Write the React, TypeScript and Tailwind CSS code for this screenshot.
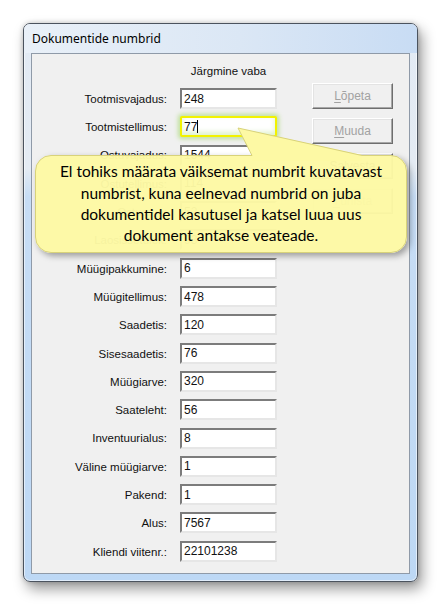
import React from 'react'

type Row = { label: string; value: string; active?: boolean }

const rows: Row[] = [
  { label: 'Tootmisvajadus:', value: '248' },
  { label: 'Tootmistellimus:', value: '77', active: true },
  { label: 'Ostuvajadus:', value: '1544' },
  { label: 'Ostutellimus:', value: '114' },
  { label: 'Ostuarve:', value: '52' },
  { label: 'Laosissetulek:', value: '93' },
  { label: 'Müügipakkumine:', value: '6' },
  { label: 'Müügitellimus:', value: '478' },
  { label: 'Saadetis:', value: '120' },
  { label: 'Sisesaadetis:', value: '76' },
  { label: 'Müügiarve:', value: '320' },
  { label: 'Saateleht:', value: '56' },
  { label: 'Inventuurialus:', value: '8' },
  { label: 'Väline müügiarve:', value: '1' },
  { label: 'Pakend:', value: '1' },
  { label: 'Alus:', value: '7567' },
  { label: 'Kliendi viitenr.:', value: '22101238' },
]

function Field({ value, active }: { value: string; active?: boolean }) {
  if (active) {
    return (
      <div className="w-[97px] h-[21px] border-2 border-[#f2f200] rounded-[2px] bg-white flex items-center pl-[2px] shadow-[0_0_4px_2px_rgba(160,215,100,0.6),inset_0_-3px_5px_rgba(190,230,150,0.5)]">
        <span className="text-[12px] leading-none text-[#111]">{value}</span>
        <span className="w-[1px] h-[13px] bg-black" />
      </div>
    )
  }
  return (
    <div className="w-[97px] h-[21px] border-2 border-t-[#7c7c7c] border-l-[#7c7c7c] border-r-[#e6e6e6] border-b-[#e6e6e6] bg-white flex items-center pl-[2px]">
      <span className="text-[12px] leading-none text-[#111]">{value}</span>
    </div>
  )
}

function Btn({ label, mn, enabled }: { label: string; mn: string; enabled?: boolean }) {
  return (
    <div
      className={`w-[81px] h-[26px] flex items-center justify-center text-[12px] bg-[#f0f0f0] border border-t-white border-l-white border-r-[#6e6e6e] border-b-[#6e6e6e] shadow-[inset_-1px_-1px_0_#a7a7a7,inset_1px_1px_0_#e3e3e3] ${
        enabled ? 'text-[#222]' : 'text-[#a2a2a2]'
      }`}
    >
      <span className="underline underline-offset-2">{mn}</span>
      {label.slice(mn.length)}
    </div>
  )
}

export default function App() {
  return (
    <div className="relative w-[441px] h-[605px] bg-white overflow-hidden font-['Liberation_Sans',Arial,sans-serif]">
      <div className="ml-[23px] mt-[23px] w-[395px] h-[559px] rounded-[7px] border border-[#4b535e] flex flex-col px-[7px] pb-[7px] bg-[linear-gradient(180deg,#e2eaf4_0%,#e4ebf3_26%,#c7ddf5_31%,#bdd8f5_100%)] shadow-[4px_7px_14px_rgba(0,0,0,0.4),0_0_5px_rgba(0,0,0,0.2),inset_0_0_0_1px_rgba(255,255,255,0.55)]">
        <div className="-mx-[7px] h-[29px] flex items-center px-[8px] rounded-t-[6px] bg-[linear-gradient(90deg,#e9f0f8_0%,#dbe7f5_55%,#c8dcf4_100%)]">
          <span className="font-['Noto_Sans',sans-serif] text-[12px] text-black">Dokumentide numbrid</span>
        </div>
        <div className="flex-1 border border-[#8f9aa8] bg-[#f0f0f0]">
          <div className="flex pt-[10px]">
            <div className="flex flex-col w-[245px]">
              <div className="flex h-[16px] items-center">
                <div className="w-[148px]" />
                <div className="w-[97px] text-center text-[11.5px] text-[#111]">Järgmine vaba</div>
              </div>
              <div className="mt-[8px] flex flex-col gap-[7.3px]">
                {rows.map((r) => (
                  <div key={r.label} className="flex items-center h-[21px]">
                    <div className="w-[135px] text-right text-[11.5px] text-[#111] pt-[2px]">{r.label}</div>
                    <div className="ml-[13px]">
                      <Field value={r.value} active={r.active} />
                    </div>
                  </div>
                ))}
              </div>
            </div>
            <div className="ml-[35px] mt-[19px] flex flex-col gap-[9px]">
              <Btn label="Lõpeta" mn="L" />
              <Btn label="Muuda" mn="M" />
              <Btn label="Salvesta" mn="S" enabled />
              <Btn label="Tühista" mn="T" />
            </div>
          </div>
        </div>
      </div>

      <div className="absolute left-[35px] top-[155px] w-[372px] h-[98px] rounded-[16px] border border-[#d8d27a] bg-[rgba(253,249,164,0.97)] shadow-[3px_3px_6px_rgba(0,0,0,0.35)] flex items-center justify-center">
        <p className="font-['Lato',sans-serif] text-[15.5px] leading-[21.3px] text-black text-center">
          El tohiks määrata väiksemat numbrit kuvatavast
          <br />
          numbrist, kuna eelnevad numbrid on juba
          <br />
          dokumentidel kasutusel ja katsel luua uus
          <br />
          dokument antakse veateade.
        </p>
      </div>
      <svg className="absolute left-[230px] top-[124px]" width="140" height="38" viewBox="0 0 140 38">
        <polygon points="8,4 22,31 22,37 132,37 132,31" fill="#fdf9a4" />
        <line x1="8" y1="4" x2="22" y2="31.5" stroke="#d8d27a" strokeWidth="1" />
        <line x1="8" y1="4" x2="132" y2="31.5" stroke="#d8d27a" strokeWidth="1" />
      </svg>
    </div>
  )
}
